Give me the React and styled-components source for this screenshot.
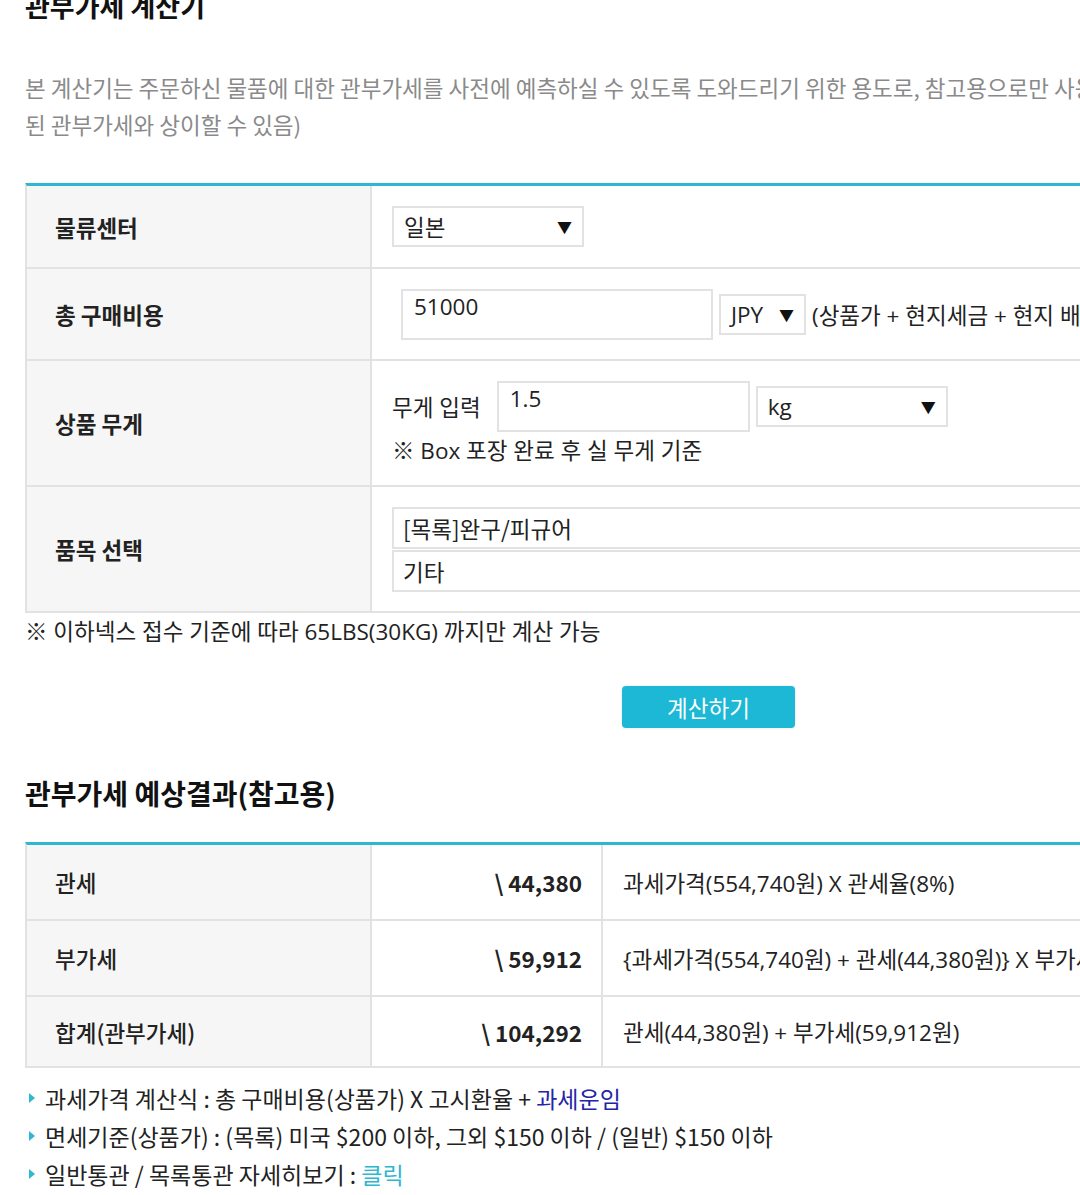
import styled, { createGlobalStyle } from 'styled-components'

const GlobalStyle = createGlobalStyle`
  html, body {
    margin: 0;
    padding: 0;
    background: #ffffff;
    overflow-x: hidden;
  }
  body {
    font-family: "Open Sans", "Noto Sans CJK KR", sans-serif;
    color: #222222;
  }
`

const colors = {
  accent: '#2fb6d1',
  button: '#1cb8d6',
  line: '#e2e2e2',
  labelBg: '#f6f6f6',
  muted: '#8a8a8a',
}

const base = '22.5px'

const Page = styled.div`
  width: 1367px;
  padding-left: 25px;
  overflow: hidden;
`

const Title = styled.h1`
  margin: -11px 0 0;
  font-family: "Noto Sans CJK KR", sans-serif;
  font-size: 27px;
  font-weight: 700;
  line-height: 34px;
  color: #111111;
`

const Intro = styled.p`
  margin: 46px 0 0;
  font-family: "Noto Sans CJK KR", sans-serif;
  font-size: ${base};
  line-height: 37px;
  color: ${colors.muted};
  white-space: nowrap;
`

const Table = styled.div`
  margin-top: ${({ $top }) => $top}px;
  border-top: 3px solid ${colors.accent};
  border-left: 2px solid ${colors.line};
  display: grid;
  grid-template-columns: ${({ $cols }) => $cols};
`

const Label = styled.div`
  height: ${({ $h }) => $h}px;
  box-sizing: border-box;
  background: ${colors.labelBg};
  border-bottom: 2px solid ${colors.line};
  border-right: 2px solid ${colors.line};
  padding-left: 28px;
  display: flex;
  align-items: center;
  font-family: "Noto Sans CJK KR", sans-serif;
  font-size: ${base};
  font-weight: ${({ $weight }) => $weight || 700};
  color: #222222;
`

const Cell = styled.div`
  height: ${({ $h }) => $h}px;
  box-sizing: border-box;
  border-bottom: 2px solid ${colors.line};
  padding-left: ${({ $pl }) => $pl || 20}px;
  display: flex;
  flex-direction: column;
  justify-content: center;
  font-size: ${base};
  color: #222222;
`

const Line = styled.div`
  display: flex;
  align-items: center;
  gap: 6px;
  white-space: nowrap;
`

const FieldName = styled.span`
  margin-right: 10px;
`

const Select = styled.div`
  width: ${({ $w }) => $w}px;
  height: 41px;
  box-sizing: border-box;
  border: 2px solid ${colors.line};
  padding: 0 10px;
  display: flex;
  align-items: center;
  justify-content: space-between;
  font-size: ${base};
  color: #222222;
  background: #ffffff;
  flex-shrink: 0;
`

const Arrow = styled.span`
  font-size: 15px;
  color: #111111;
`

const Input = styled.div`
  width: ${({ $w }) => $w}px;
  height: 51px;
  box-sizing: border-box;
  border: 2px solid ${colors.line};
  padding: 2px 11px;
  font-size: ${base};
  line-height: 28px;
  color: #222222;
  flex-shrink: 0;
`

const Hint = styled.div`
  margin-top: 4px;
  line-height: 30px;
`

const ListBox = styled.div`
  display: flex;
  flex-direction: column;
  gap: 1px;
`

const ListOption = styled.div`
  height: 42px;
  box-sizing: border-box;
  border: 2px solid ${colors.line};
  border-right: none;
  padding-left: 9px;
  display: flex;
  align-items: center;
  font-family: "Noto Sans CJK KR", sans-serif;
  font-size: ${base};
  color: #222222;
`

const Note = styled.p`
  margin: 4px 0 0;
  font-size: ${base};
  line-height: 30px;
  color: #222222;
`

const ButtonRow = styled.div`
  margin-top: 39px;
  display: flex;
  justify-content: center;
`

const CalcButton = styled.button`
  width: 173px;
  height: 42px;
  border: none;
  border-radius: 4px;
  background: ${colors.button};
  box-shadow: 0 0 3px rgba(0, 0, 0, 0.12);
  color: #ffffff;
  font-family: "Noto Sans CJK KR", sans-serif;
  font-size: ${base};
  cursor: pointer;
`

const SubTitle = styled.h2`
  margin: 48px 0 0;
  font-family: "Noto Sans CJK KR", sans-serif;
  font-size: 28px;
  font-weight: 700;
  line-height: 34px;
  color: #111111;
`

const Amount = styled.div`
  height: ${({ $h }) => $h}px;
  box-sizing: border-box;
  border-bottom: 2px solid ${colors.line};
  border-right: 2px solid ${colors.line};
  padding-right: 19px;
  display: flex;
  align-items: center;
  justify-content: flex-end;
  font-family: "Noto Sans CJK KR", sans-serif;
  font-size: 22.5px;
  font-weight: 700;
  color: #222222;
`

const Formula = styled.div`
  height: ${({ $h }) => $h}px;
  box-sizing: border-box;
  border-bottom: 2px solid ${colors.line};
  padding-left: 20px;
  display: flex;
  align-items: center;
  font-size: ${base};
  white-space: nowrap;
  color: #222222;
`

const Bullets = styled.ul`
  list-style: none;
  margin: 11px 0 0;
  padding: 0;
`

const Bullet = styled.li`
  position: relative;
  padding-left: 20px;
  font-family: "Noto Sans CJK KR", sans-serif;
  font-size: 23px;
  line-height: 38px;
  color: #222222;
  white-space: nowrap;

  &::before {
    content: '';
    position: absolute;
    left: 4px;
    top: 14px;
    border-left: 6px solid ${colors.accent};
    border-top: 5px solid transparent;
    border-bottom: 5px solid transparent;
  }
`

const Link = styled.a`
  color: ${({ $tone }) => ($tone === 'navy' ? '#2424a8' : colors.accent)};
  text-decoration: none;
`

const results = [
  { label: '관세', amount: '\\ 44,380', formula: '과세가격(554,740원) X 관세율(8%)', h: 76 },
  {
    label: '부가세',
    amount: '\\ 59,912',
    formula: '{과세가격(554,740원) + 관세(44,380원)} X 부가세율(10%)',
    h: 76,
  },
  { label: '합계(관부가세)', amount: '\\ 104,292', formula: '관세(44,380원) + 부가세(59,912원)', h: 71 },
]

function App() {
  return (
    <Page>
      <GlobalStyle />
      <Title>관부가세 계산기</Title>
      <Intro>
        본 계산기는 주문하신 물품에 대한 관부가세를 사전에 예측하실 수 있도록 도와드리기 위한 용도로, 참고용으로만 사용하시기 바랍니다. (실제 부과
        <br />
        된 관부가세와 상이할 수 있음)
      </Intro>

      <Table $top={40} $cols="345px 1fr">
        <Label $h={83}>물류센터</Label>
        <Cell $h={83}>
          <Line>
            <Select $w={192}>
              <span>일본</span>
              <Arrow>▼</Arrow>
            </Select>
          </Line>
        </Cell>

        <Label $h={92}>총 구매비용</Label>
        <Cell $h={92} $pl={29}>
          <Line>
            <Input $w={312}>51000</Input>
            <Select $w={87}>
              <span>JPY</span>
              <Arrow>▼</Arrow>
            </Select>
            <span>(상품가 + 현지세금 + 현지 배송비)</span>
          </Line>
        </Cell>

        <Label $h={126}>상품 무게</Label>
        <Cell $h={126}>
          <Line>
            <FieldName>무게 입력</FieldName>
            <Input $w={253}>1.5</Input>
            <Select $w={192}>
              <span>kg</span>
              <Arrow>▼</Arrow>
            </Select>
          </Line>
          <Hint>※ Box 포장 완료 후 실 무게 기준</Hint>
        </Cell>

        <Label $h={126}>품목 선택</Label>
        <Cell $h={126}>
          <ListBox>
            <ListOption>[목록]완구/피규어</ListOption>
            <ListOption>기타</ListOption>
          </ListBox>
        </Cell>
      </Table>

      <Note>※ 이하넥스 접수 기준에 따라 65LBS(30KG) 까지만 계산 가능</Note>

      <ButtonRow>
        <CalcButton>계산하기</CalcButton>
      </ButtonRow>

      <SubTitle>관부가세 예상결과(참고용)</SubTitle>

      <Table $top={32} $cols="345px 231px 1fr">
        {results.map((r) => [
          <Label key={r.label + '-l'} $h={r.h} $weight={500}>
            {r.label}
          </Label>,
          <Amount key={r.label + '-a'} $h={r.h}>
            {r.amount}
          </Amount>,
          <Formula key={r.label + '-f'} $h={r.h}>
            {r.formula}
          </Formula>,
        ])}
      </Table>

      <Bullets>
        <Bullet>
          과세가격 계산식 : 총 구매비용(상품가) X 고시환율 + <Link $tone="navy">과세운임</Link>
        </Bullet>
        <Bullet>면세기준(상품가) : (목록) 미국 $200 이하, 그외 $150 이하 / (일반) $150 이하</Bullet>
        <Bullet>
          일반통관 / 목록통관 자세히보기 : <Link>클릭</Link>
        </Bullet>
      </Bullets>
    </Page>
  )
}

export default App
